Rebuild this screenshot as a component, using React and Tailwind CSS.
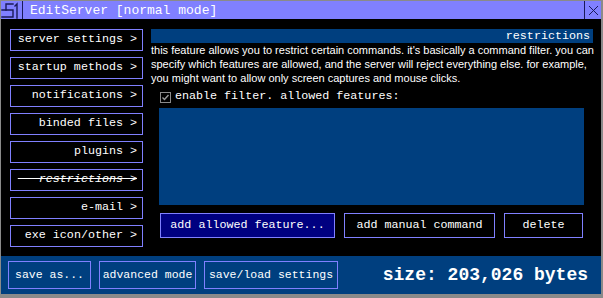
import React from 'react';

const mono = { fontFamily: '"Liberation Mono", "Courier New", monospace' };

const navItems = [
  'server settings >',
  'startup methods >',
  'notifications >',
  'binded files >',
  'plugins >',
  'restrictions',
  'e-mail >',
  'exe icon/other >',
];

function TitleIcon() {
  return (
    <svg width="20" height="18" viewBox="0 0 20 18" className="shrink-0">
      <g stroke="#1a1a5a" strokeWidth="1.4" fill="none" strokeLinecap="square">
        <path d="M12 3H5V9" />
        <path d="M1 9H12V16H1" />
        <path d="M14 5L16 3V17" />
      </g>
    </svg>
  );
}

export default function App() {
  return (
    <div className="w-[603px] h-[298px] bg-[#8a8a8a] pt-px pl-px pr-[2px] pb-[4px] flex flex-col" style={mono}>
      {/* title bar */}
      <div className="h-[18px] bg-[#8080ff] flex items-stretch shrink-0">
        <div className="flex items-center border-r border-[#1a1a5a] pr-px">
          <TitleIcon />
        </div>
        <div className="flex items-center pl-[7px] text-[13px] text-white leading-none">
          EditServer [normal mode]
        </div>
        <div className="ml-auto w-[17px] border-l border-[#1a1a5a] flex items-center justify-center">
          <svg width="11" height="11" viewBox="0 0 11 11">
            <path d="M1 1L10 10M10 1L1 10" stroke="#1a1a5a" strokeWidth="1" />
          </svg>
        </div>
      </div>

      {/* body */}
      <div className="flex-1 bg-black flex pl-[9px] pt-[10px]">
        <div className="w-[133px] flex flex-col gap-[6px] shrink-0">
          {navItems.map((item, idx) => (
            <div
              key={idx}
              className="h-[22px] border border-[#8080ff] flex items-center justify-end pr-[5px] text-[11.7px] text-white whitespace-pre"
            >
              {item === 'restrictions' ? (
                <span className="line-through italic">{'\u00a0\u00a0\u00a0restrictions >'}</span>
              ) : (
                item
              )}
            </div>
          ))}
        </div>

        <div className="ml-[8px] w-[442px] flex flex-col">
          <div className="h-[14px] bg-[#003f7f] text-right pr-[3px] text-[11.7px] leading-[14px] text-white">
            restrictions
          </div>
          <div
            className="text-[11px] leading-[14px] text-white whitespace-nowrap"
            style={{ fontFamily: '"Liberation Sans", Arial, sans-serif' }}
          >
            this feature allows you to restrict certain commands. it's basically a command filter. you can
            <br />
            specify which features are allowed, and the server will reject everything else. for example,
            <br />
            you might want to allow only screen captures and mouse clicks.
          </div>
          <div className="mt-[6px] h-[12px] flex items-center">
            <div className="ml-[9px] w-[11px] h-[11px] border border-[#8a8a8a] flex items-center justify-center">
              <svg width="9" height="9" viewBox="0 0 9 9">
                <path d="M1.5 4.5L3.5 6.5L7.5 2" stroke="#9a9a9a" strokeWidth="1.4" fill="none" />
              </svg>
            </div>
            <span className="ml-[4px] text-[11.7px] text-white">enable filter. allowed features:</span>
          </div>
          <div className="mt-[5px] ml-[8px] w-[425px] h-[97px] bg-[#003f7f]" />
          <div className="mt-[8px] ml-[9px] flex gap-[9px] text-[11.7px] text-white">
            <div className="w-[175px] h-[25px] border border-[#8080ff] bg-[#000080] flex items-center justify-center">
              add allowed feature...
            </div>
            <div className="w-[151px] h-[25px] border border-[#8080ff] flex items-center justify-center">
              add manual command
            </div>
            <div className="w-[79px] h-[25px] border border-[#8080ff] flex items-center justify-center">
              delete
            </div>
          </div>
        </div>
      </div>

      {/* bottom bar */}
      <div className="h-[38px] bg-[#003f7f] flex items-center pl-[7px] gap-[8px] shrink-0 text-white">
        <div className="w-[83px] h-[28px] border border-[#8080ff] flex items-center justify-center text-[11.5px]">
          save as...
        </div>
        <div className="w-[97px] h-[28px] border border-[#8080ff] flex items-center justify-center text-[11.5px]">
          advanced mode
        </div>
        <div className="w-[134px] h-[28px] border border-[#8080ff] flex items-center justify-center text-[11.5px]">
          save/load settings
        </div>
        <div className="ml-auto pr-[13px] text-[18px] font-bold">size: 203,026 bytes</div>
      </div>
    </div>
  );
}
